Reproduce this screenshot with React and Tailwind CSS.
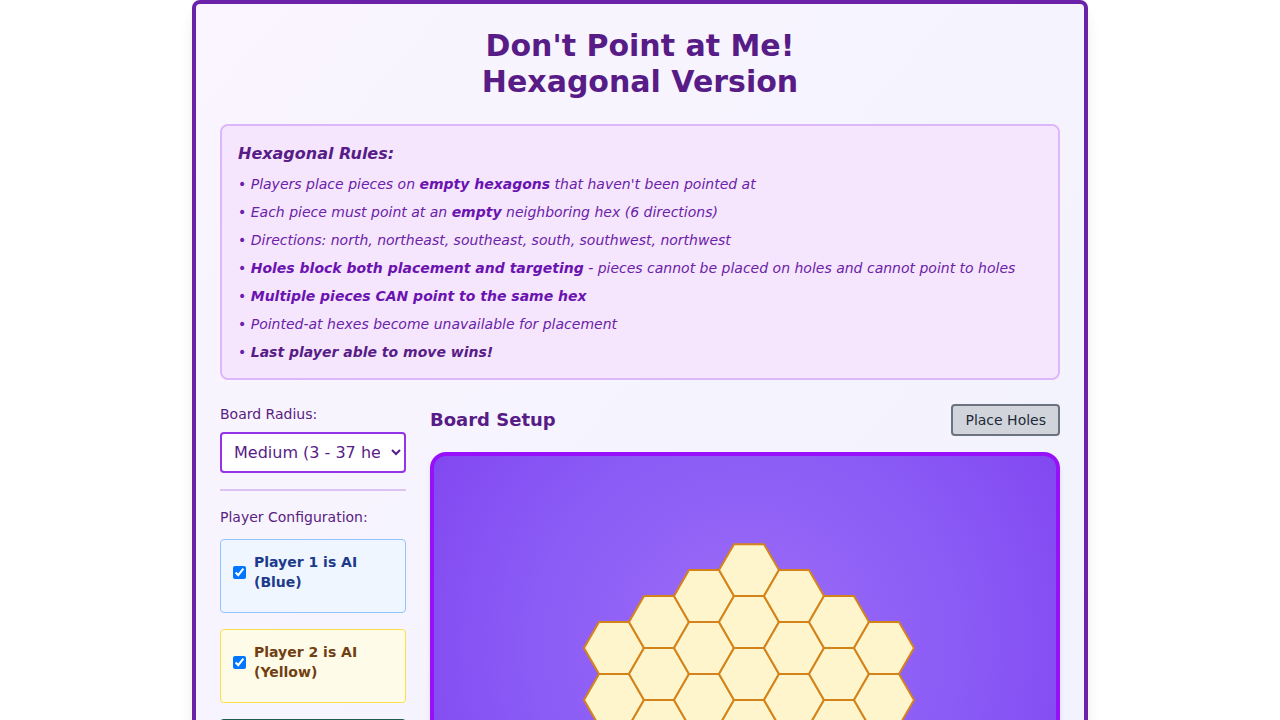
import React from "react";

const HEX = 30;
const H = Math.sqrt(3) * HEX;

// axial coords for a hex board of the given radius
function boardCells(radius) {
  const cells = [];
  for (let q = -radius; q <= radius; q++) {
    for (let r = -radius; r <= radius; r++) {
      if (Math.abs(q + r) <= radius) cells.push({ q, r });
    }
  }
  return cells;
}

function hexPoints(cx, cy) {
  const h = H / 2;
  return [
    [cx - HEX, cy],
    [cx - HEX / 2, cy - h],
    [cx + HEX / 2, cy - h],
    [cx + HEX, cy],
    [cx + HEX / 2, cy + h],
    [cx - HEX / 2, cy + h],
  ]
    .map((p) => p.join(","))
    .join(" ");
}

function HexBoard({ radius }) {
  const cells = boardCells(radius);
  const w = 346;
  const h = 440;
  return (
    <svg width={w} height={h} viewBox={`${-w / 2 - 4} ${-h / 2} ${w} ${h}`}>
      {cells.map(({ q, r }) => {
        const cx = 1.5 * HEX * q;
        const cy = H * (r + q / 2);
        return (
          <polygon
            key={`${q},${r}`}
            points={hexPoints(cx, cy)}
            fill="#fef5cc"
            stroke="#d4831a"
            strokeWidth="2"
            strokeLinejoin="round"
          />
        );
      })}
    </svg>
  );
}

function PlayerToggle({ label, color, box }) {
  return (
    <label className={`flex items-center gap-2 px-3 pt-3 pb-5 rounded border ${box}`}>
      <input type="checkbox" defaultChecked className="w-[13px] h-[13px] shrink-0" />
      <span className={`text-sm font-bold leading-5 ${color}`}>{label}</span>
    </label>
  );
}

export default function App() {
  return (
    <div className="min-h-screen bg-white font-['DejaVu_Sans',sans-serif]">
      <div className="max-w-4xl mx-auto border-4 border-[#6b21a8] rounded-lg bg-linear-to-br from-[#faf5ff] to-[#f0f2fd] p-6 shadow-lg">
        <h1 className="text-3xl font-bold text-center text-[#581c87]">
          Don't Point at Me!
          <br />
          Hexagonal Version
        </h1>

        <div className="mt-6 border-2 border-[#dcb8fa] bg-[#f5e6fd] rounded-lg p-4 italic">
          <h2 className="text-base leading-6 font-bold text-[#581c87] mb-2">Hexagonal Rules:</h2>
          <ul className="space-y-2 text-sm leading-5 text-[#6b21a8]">
            <li>
              • Players place pieces on <b className="text-[#6b13b0]">empty hexagons</b> that haven't been pointed at
            </li>
            <li>
              • Each piece must point at an <b className="text-[#6b13b0]">empty</b> neighboring hex (6 directions)
            </li>
            <li>• Directions: north, northeast, southeast, south, southwest, northwest</li>
            <li>
              • <b className="text-[#6b13b0]">Holes block both placement and targeting</b> - pieces cannot be placed on holes and cannot point to holes
            </li>
            <li>
              • <b className="text-[#6b13b0]">Multiple pieces CAN point to the same hex</b>
            </li>
            <li>• Pointed-at hexes become unavailable for placement</li>
            <li>
              • <b className="text-[#581c87]">Last player able to move wins!</b>
            </li>
          </ul>
        </div>

        <div className="mt-6 flex gap-6">
          <div className="w-[186px] shrink-0">
            <div className="text-sm text-[#5b2180]">Board Radius:</div>
            <select
              defaultValue="3"
              className="mt-2 w-full h-[41px] px-2 text-base text-[#581c87] bg-white border-2 border-[#9333ea] rounded"
            >
              <option value="2">Small (2 - 19 hexes)</option>
              <option value="3">Medium (3 - 37 hexes)</option>
              <option value="4">Large (4 - 61 hexes)</option>
            </select>
            <div className="mt-4 h-[2px] bg-[#dcc3f4]" />
            <div className="mt-4 text-sm text-[#5b2180]">Player Configuration:</div>
            <div className="mt-3 space-y-4">
              <PlayerToggle
                label="Player 1 is AI (Blue)"
                color="text-[#1e3a8a]"
                box="bg-[#eff6ff] border-[#93c5fd]"
              />
              <PlayerToggle
                label="Player 2 is AI (Yellow)"
                color="text-[#713f12]"
                box="bg-[#fefce8] border-[#fde047]"
              />
              <PlayerToggle
                label="Player 3 is AI (Green)"
                color="text-[#14532d]"
                box="bg-[#f0fdf4] border-[#1f5d4f] border-2"
              />
            </div>
          </div>

          <div className="flex-1 min-w-0">
            <div className="flex items-center justify-between">
              <h2 className="text-lg font-bold text-[#581c87]">Board Setup</h2>
              <button className="h-8 px-3 text-sm text-gray-800 bg-[#d1d5db] border-2 border-[#6b7280] rounded">
                Place Holes
              </button>
            </div>
            <div className="mt-4 border-4 border-[#9810fa] rounded-2xl bg-[radial-gradient(circle_at_50%_35%,#9d6cf6,#8b5cf6_45%,#7c3aed)] flex justify-center py-[50px] shadow-md">
              <HexBoard radius={3} />
            </div>
          </div>
        </div>
      </div>
    </div>
  );
}
